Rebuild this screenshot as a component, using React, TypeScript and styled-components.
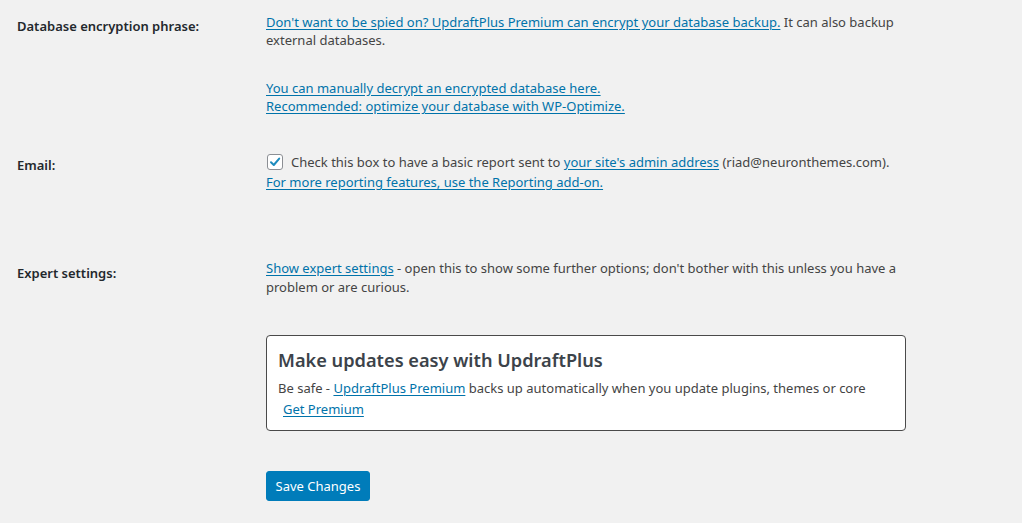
import React from "react"
import styled, { createGlobalStyle } from "styled-components"

const GlobalStyles = createGlobalStyle`
  *, *::before, *::after { box-sizing: border-box; margin: 0; padding: 0; }
  body {
    background: #f1f1f1;
    color: #444;
    font-family: "Noto Sans", "Open Sans", sans-serif;
    font-size: 13px;
    line-height: 18.5px;
  }
`

const Page = styled.form`
  padding: 0 0 23px 17px;
  width: 1022px;
`

const Row = styled.div<{ $top: number }>`
  display: grid;
  grid-template-columns: 249px 640px;
  padding-top: ${p => p.$top}px;
`

const Label = styled.div`
  padding-top: 4.5px;
  font-weight: 600;
  color: #23282d;
`

const Cell = styled.div`
  display: flex;
  flex-direction: column;
`

const Para = styled.p<{ $gap?: number }>`
  margin-top: ${p => p.$gap ?? 0}px;
`

const Link = styled.a`
  color: #0073aa;
  text-decoration: underline;
  text-underline-offset: 2px;
  cursor: pointer;
`

const CheckLine = styled.label`
  display: flex;
  align-items: center;
  height: 21.5px;
  gap: 8px;
  padding-left: 1px;
`

const Box = styled.span`
  width: 16px;
  height: 16px;
  flex: none;
  background: #fff;
  border: 1px solid #8c8f94;
  border-radius: 3px;
  display: flex;
  align-items: center;
  justify-content: center;
`

const Spacer = styled.div`
  height: 49px;
`

const Notice = styled.div`
  margin-top: 39px;
  margin-left: 249px;
  width: 640px;
  height: 96px;
  background: #fff;
  border: 1px solid #4a4a4a;
  border-radius: 4px;
  padding: 12px 11px 0;
`

const NoticeTitle = styled.h3`
  font-size: 18.2px;
  font-weight: 600;
  line-height: 24px;
  color: #3c434a;
`

const NoticeText = styled.p`
  margin-top: 6.5px;
`

const NoticeLink = styled(Link)`
  display: inline-block;
  margin: 2.5px 0 0 5px;
`

const Actions = styled.div`
  margin: 40px 0 0 249px;
`

const Button = styled.button`
  width: 104px;
  height: 30px;
  background: #007cba;
  border: 1px solid #007cba;
  border-radius: 3px;
  color: #fff;
  font-family: inherit;
  font-size: 13px;
  cursor: pointer;
`

export default function App() {
  return (
    <>
      <GlobalStyles />
      <Page>
        <Row $top={12.5}>
          <Label>Database encryption phrase:</Label>
          <Cell>
            <Para>
              <Link>Don't want to be spied on? UpdraftPlus Premium can encrypt your database backup.</Link> It can also backup external databases.
            </Para>
            <Para $gap={29.3}>
              <Link>You can manually decrypt an encrypted database here.</Link>
              <br />
              <Link>Recommended: optimize your database with WP-Optimize.</Link>
            </Para>
          </Cell>
        </Row>
        <Row $top={35.5}>
          <Label>Email:</Label>
          <Cell>
            <CheckLine>
              <Box>
                <svg width="12" height="12" viewBox="0 0 12 12">
                  <path d="M2 6.3 L4.8 9 L10.2 2.6" fill="none" stroke="#1e8cbe" strokeWidth="2" strokeLinecap="round" strokeLinejoin="round" />
                </svg>
              </Box>
              <span>
                Check this box to have a basic report sent to <Link>your site's admin address</Link> (riad@neuronthemes.com).
              </span>
            </CheckLine>
            <Para>
              <Link>For more reporting features, use the Reporting add-on.</Link>
            </Para>
          </Cell>
        </Row>
        <Spacer />
        <Row $top={19}>
          <Label>Expert settings:</Label>
          <Cell>
            <Para>
              <Link>Show expert settings</Link> - open this to show some further options; don't bother with this unless you have a problem or are curious.
            </Para>
          </Cell>
        </Row>
        <Notice>
          <NoticeTitle>Make updates easy with UpdraftPlus</NoticeTitle>
          <NoticeText>
            Be safe - <Link>UpdraftPlus Premium</Link> backs up automatically when you update plugins, themes or core
          </NoticeText>
          <NoticeLink>Get Premium</NoticeLink>
        </Notice>
        <Actions>
          <Button type="button">Save Changes</Button>
        </Actions>
      </Page>
    </>
  )
}
